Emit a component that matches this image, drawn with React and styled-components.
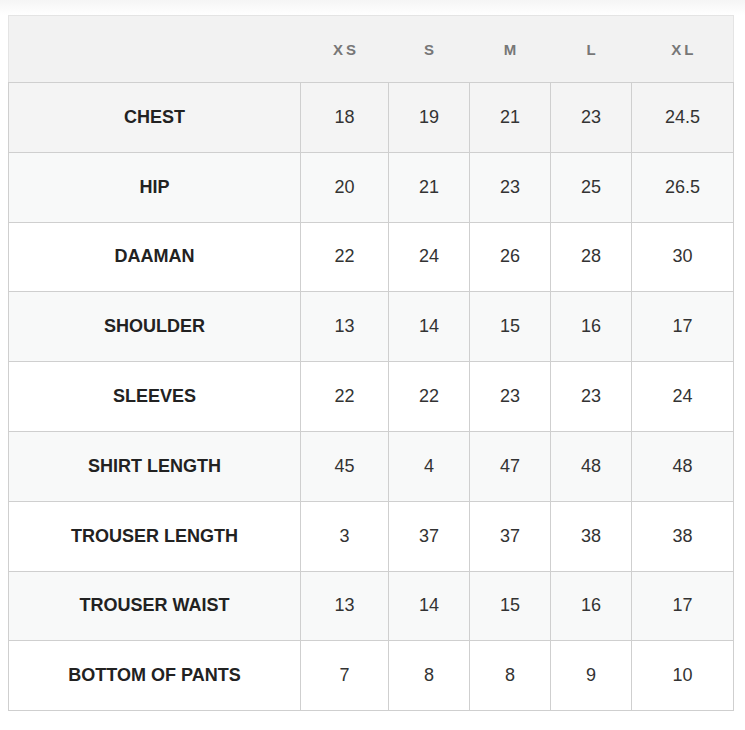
import React from 'react'
import styled, { createGlobalStyle } from 'styled-components'

const GlobalStyle = createGlobalStyle`
  body {
    margin: 0;
    background: #fff;
    font-family: "Liberation Sans", Arial, sans-serif;
  }
`

const Page = styled.div`
  padding: 15px 12px 20px 8px;
  background: linear-gradient(to bottom, #f5f5f5 0px, #ffffff 15px);
`

const Table = styled.table`
  width: 725px;
  border-collapse: collapse;
  table-layout: fixed;
`

const HeadRow = styled.tr`
  background: #f2f2f2;
  border: 1px solid #e4e4e4;
`

const HeadCell = styled.th`
  height: 66px;
  padding: 0;
  font-size: 15px;
  font-weight: bold;
  color: #777;
  letter-spacing: 3px;
  text-align: center;
  text-indent: 3px;
`

const Row = styled.tr`
  background: ${(p) => p.$bg};
`

const Label = styled.td`
  height: 68.8px;
  padding: 0;
  border: 1px solid #cfcfcf;
  text-align: center;
  font-size: 18px;
  font-weight: bold;
  color: #222;
`

const Value = styled.td`
  padding: 0;
  border: 1px solid #cfcfcf;
  text-align: center;
  font-size: 18px;
  color: #333;
`

const sizes = ['XS', 'S', 'M', 'L', 'XL']
const widths = [292, 88, 81, 81, 81, 102]

const rows = [
  ['CHEST', '18', '19', '21', '23', '24.5'],
  ['HIP', '20', '21', '23', '25', '26.5'],
  ['DAAMAN', '22', '24', '26', '28', '30'],
  ['SHOULDER', '13', '14', '15', '16', '17'],
  ['SLEEVES', '22', '22', '23', '23', '24'],
  ['SHIRT LENGTH', '45', '4', '47', '48', '48'],
  ['TROUSER LENGTH', '3', '37', '37', '38', '38'],
  ['TROUSER WAIST', '13', '14', '15', '16', '17'],
  ['BOTTOM OF PANTS', '7', '8', '8', '9', '10'],
]

const rowBg = (i) => {
  if (i === 0) return '#f4f4f4'
  return i % 2 === 1 ? '#f8f9f9' : '#ffffff'
}

export default function App() {
  return (
    <Page>
      <GlobalStyle />
      <Table>
        <colgroup>
          {widths.map((w, i) => (
            <col key={i} style={{ width: w }} />
          ))}
        </colgroup>
        <thead>
          <HeadRow>
            <HeadCell />
            {sizes.map((s) => (
              <HeadCell key={s}>{s}</HeadCell>
            ))}
          </HeadRow>
        </thead>
        <tbody>
          {rows.map((r, i) => (
            <Row key={r[0]} $bg={rowBg(i)}>
              <Label>{r[0]}</Label>
              {r.slice(1).map((v, j) => (
                <Value key={j}>{v}</Value>
              ))}
            </Row>
          ))}
        </tbody>
      </Table>
    </Page>
  )
}
